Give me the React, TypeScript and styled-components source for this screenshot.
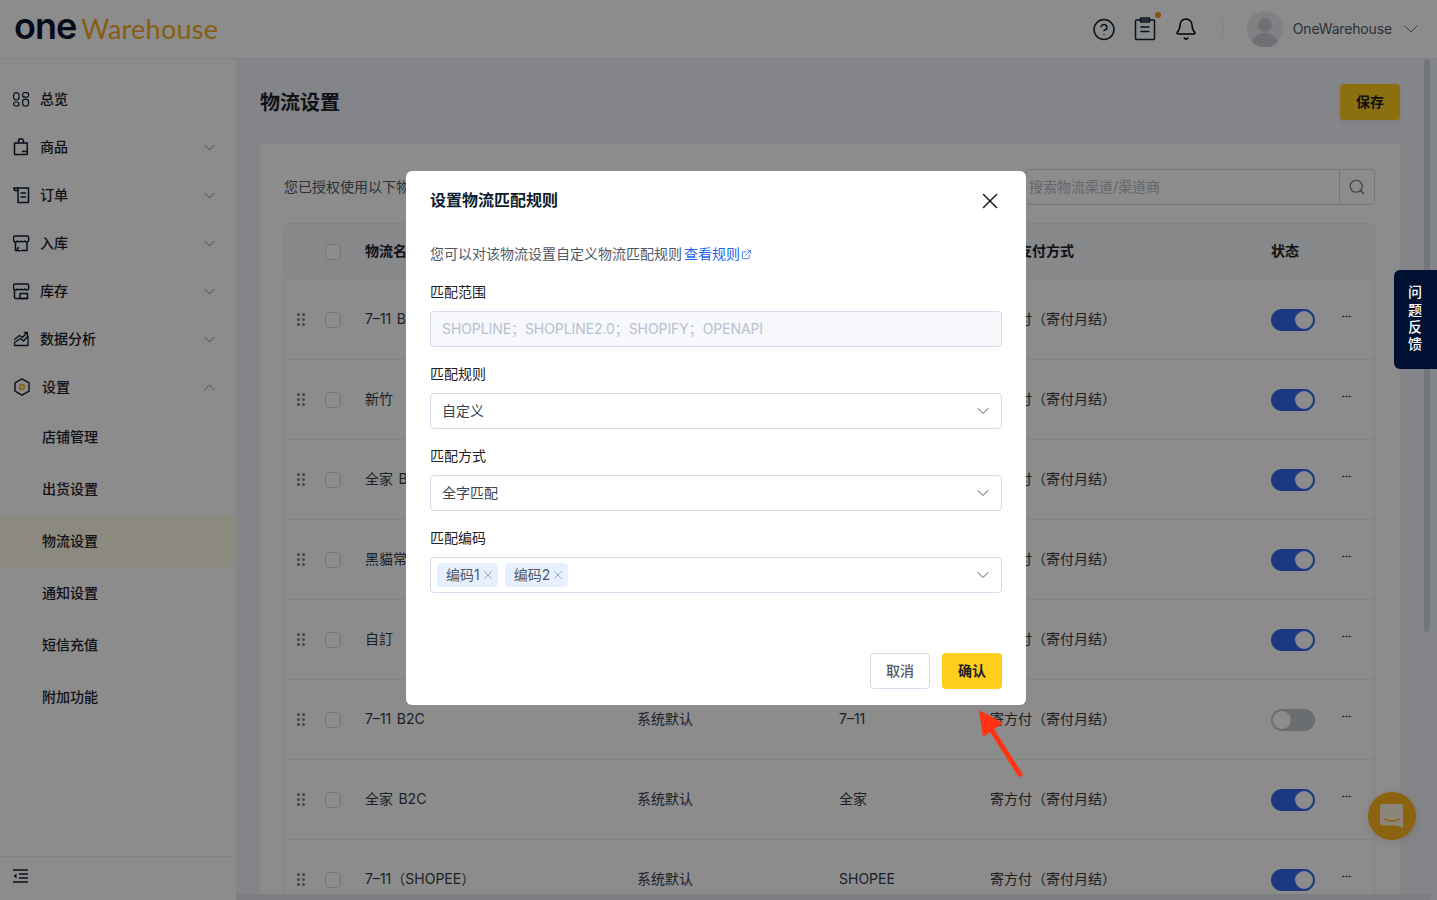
import React from "react";
import styled, { createGlobalStyle } from "styled-components";
import { Bell, ChevronDown, ChevronUp, CircleHelp, Ellipsis, ExternalLink, Search, X } from "lucide-react";

const Global = createGlobalStyle`
  html, body { margin: 0; height: 100%; overflow: hidden; }
  body { font-family: Inter, "Noto Sans CJK SC", sans-serif; font-size: 14px; line-height: 20px; color: #1d2129; background: #fff; }
  * { box-sizing: border-box; }
`;

const Shell = styled.div`height: 100vh; display: flex; flex-direction: column;`;
const Header = styled.header`
  height: 59px; flex: none; display: flex; align-items: center; background: #fff;
  border-bottom: 1px solid #eceef2; padding: 0 14px 0 14px;
`;
const Logo = styled.div`display: flex; align-items: baseline; gap: 5px; margin-top: -7px; flex: 1;`;
const LogoOne = styled.span`font: 600 36px/1 Inter, sans-serif; color: #0a1430; letter-spacing: -1px;`;
const LogoWare = styled.span`font: 400 27px/1 Lato, sans-serif; color: #f4aa24; letter-spacing: 0.25px;`;
const HeaderIcons = styled.div`display: flex; align-items: center; gap: 17px; color: #0a1f33;`;
const IconSlot = styled.span`position: relative; display: flex; width: 24px; justify-content: center;`;
const Dot = styled.i`position: absolute; top: -5px; right: -4px; width: 6px; height: 6px; border-radius: 50%; background: #f0921e;`;
const VDivider = styled.span`width: 1px; height: 20px; background: #e8eaee; margin: 0 24px 0 24px;`;
const UserName = styled.span`margin-left: 10px; color: #4e5969; font-size: 14px; letter-spacing: -0.15px;`;
const UserChevron = styled.span`display: flex; margin-left: 7px; color: #6b7280;`;

const Body = styled.div`flex: 1; min-height: 0; display: flex;`;
const Sidebar = styled.aside`width: 236px; flex: none; background: #fff; display: flex; flex-direction: column;`;
const Nav = styled.nav`flex: 1; padding-top: 16px;`;
const NavItem = styled.div`
  height: 48px; display: flex; align-items: center; padding: 0 17px 0 13px; font-weight: 500; color: #1d2129;
`;
const NavIconWrap = styled.span`width: 18px; height: 18px; display: flex; margin-right: 9px; color: #0f1c33;`;
const NavLabel = styled.span<{ $shift?: boolean }>`flex: 1; margin-left: ${(p) => (p.$shift ? "2px" : "0")};`;
const NavChevron = styled.span`display: flex; color: #6f7582;`;
const SubItem = styled.div<{ $active?: boolean }>`
  height: 52px; display: flex; align-items: center; padding-left: 42px; font-weight: 500;
  background: ${(p) => (p.$active ? "#fffbe6" : "transparent")};
`;
const SideFooter = styled.div`
  height: 44px; flex: none; border-top: 1px solid #eceef2; display: flex; align-items: center; padding: 0 0 5px 13px; color: #0f1c33;
`;

const Main = styled.main`flex: 1; min-width: 0; background: #f0f2f7; overflow: hidden;`;
const Page = styled.div`width: 1188px; padding: 25px 24px 24px;`;
const TitleBar = styled.div`display: flex; align-items: center; justify-content: space-between; height: 36px; margin-bottom: 24px;`;
const PageTitle = styled.h1`margin: 2px 0 0; font-size: 20px; font-weight: 600; color: #1d2129; line-height: 36px;`;
const SaveButton = styled.button`
  width: 60px; height: 36px; border: 0; border-radius: 4px; background: #ffcd1c; color: #1d2129;
  font: 600 14px/20px Inter, "Noto Sans CJK SC", sans-serif; box-shadow: 0 2px 4px rgba(0,0,0,.08);
`;
const Card = styled.section`background: #fff; border-radius: 4px; padding: 25px 25px 12px 24px;`;
const Toolbar = styled.div`display: flex; align-items: center; justify-content: space-between; height: 36px; margin-bottom: 18px;`;
const AuthText = styled.span`color: #4e5969;`;
const SearchBox = styled.div`
  width: 350px; height: 36px; border: 1px solid #d4d8e8; border-radius: 4px; display: flex; align-items: center; padding-left: 3px;
`;
const SearchText = styled.span`flex: 1; color: #b4b9c5;`;
const SearchBtn = styled.span`width: 35px; height: 34px; border-left: 1px solid #d4d8e8; display: flex; align-items: center; justify-content: center; color: #6b7280;`;

const Table = styled.div`border: 1px solid #eceef2; border-radius: 4px 4px 0 0;`;
const cols = "40px 40px 272px 202px 151px 281px 70px 1fr";
const HeadRow = styled.div`
  height: 55px; display: grid; grid-template-columns: ${cols}; align-items: center; background: #f6f7fa; font-weight: 600; color: #1d2129;
`;
const Row = styled.div`
  height: 80px; display: grid; grid-template-columns: ${cols}; align-items: center; border-top: 1px solid #eceef2; color: #333a45;
`;
const Cell = styled.span`white-space: nowrap; margin-bottom: 2px; word-spacing: 1.5px;`;
const Grip = styled.span`
  display: grid; grid-template-columns: 3px 3px; gap: 2px; width: 8px; margin-left: 12px;
`;
const GripDot = styled.i`width: 3px; height: 3px; border-radius: 50%; background: #7c8296;`;
const Check = styled.span`display: block; width: 16px; height: 16px; border: 1px solid #d4d8e8; border-radius: 4px; background: #fff;`;
const Toggle = styled.span<{ $on: boolean }>`
  width: 44px; height: 22px; border-radius: 11px; display: flex; align-items: center; padding: 0 2px;
  justify-content: ${(p) => (p.$on ? "flex-end" : "flex-start")};
  background: ${(p) => (p.$on ? "#3366ee" : "#c2c7d0")};
`;
const Knob = styled.i`width: 18px; height: 18px; border-radius: 50%; background: #fff;`;
const More = styled.span`display: flex; margin-top: -6px; color: #1d2129;`;

const ScrollThumbV = styled.div`position: fixed; left: 1424px; top: 59px; width: 6px; height: 573px; border-radius: 3px; background: #cfd6e0;`;
const ScrollThumbH = styled.div`position: fixed; left: 236px; top: 894px; width: 1194px; height: 6px; background: #e2e5eb;`;
const ChatBubble = styled.div`
  position: fixed; left: 1368px; top: 792px; width: 48px; height: 48px; border-radius: 50%; background: #ffb41c;
  display: flex; align-items: center; justify-content: center; box-shadow: 0 2px 10px rgba(0,0,0,.12);
`;

const Mask = styled.div`position: fixed; inset: 0; background: rgba(0,0,0,.45); padding: 171px 0 0 406px; z-index: 10;`;
const Modal = styled.div`width: 620px; height: 534px; background: #fff; border-radius: 6px; padding: 17px 24px 16px; display: flex; flex-direction: column;`;
const ModalHead = styled.div`display: flex; align-items: center; justify-content: space-between; height: 24px; margin-bottom: 32px;`;
const ModalTitle = styled.h2`margin: 0; font-size: 16px; line-height: 24px; font-weight: 600; color: #0f1c2e;`;
const CloseBtn = styled.span`display: flex; margin: 2px -1px 0 0; color: #1d2129;`;
const Desc = styled.div`line-height: 20px; color: #4e5969; margin-bottom: 18px; display: flex; align-items: center;`;
const RuleLink = styled.span`color: #2468f2; margin-left: 2px; display: inline-flex; align-items: center; gap: 1px;`;
const Field = styled.div`margin-bottom: 17px;`;
const Label = styled.div`line-height: 20px; margin-bottom: 9px; color: #1d2129;`;
const Control = styled.div<{ $disabled?: boolean }>`
  height: 36px; border: 1px solid #d6d9ea; border-radius: 4px; display: flex; align-items: center;
  padding: 0 11px; justify-content: space-between;
  background: ${(p) => (p.$disabled ? "#f6f8fc" : "#fff")};
  color: ${(p) => (p.$disabled ? "#b9c0d0" : "#3c4350")};
  letter-spacing: ${(p) => (p.$disabled ? "-0.08px" : "0")};
`;
const Tags = styled.div`display: flex; gap: 7px; margin-left: -5px;`;
const Tag = styled.span`
  height: 24px; padding: 0 3px 0 9px; border-radius: 4px; background: #e6f0ff; color: #4e5969; display: flex; align-items: center; gap: 1px;
`;
const TagX = styled.span`display: flex; color: #7d8594;`;
const SelectChevron = styled.span`display: flex; margin-right: -3px; color: #3c4350;`;
const ModalFoot = styled.div`margin-top: auto; display: flex; justify-content: flex-end; gap: 12px;`;
const CancelBtn = styled.button`
  width: 60px; height: 36px; background: #fff; border: 1px solid #d6d9ea; border-radius: 4px; color: #4e5969;
  font: 500 14px/20px Inter, "Noto Sans CJK SC", sans-serif;
`;
const ConfirmBtn = styled.button`
  width: 60px; height: 36px; background: #ffcd1c; border: 0; border-radius: 4px; color: #1d2129;
  font: 600 14px/20px Inter, "Noto Sans CJK SC", sans-serif;
`;

const Feedback = styled.div`
  position: fixed; right: 0; top: 270px; width: 43px; height: 99px; z-index: 20; background: #001033; color: #fff;
  border-radius: 6px 0 0 6px; font-weight: 500; display: flex; flex-direction: column; align-items: center; justify-content: center;
  line-height: 17.3px; padding: 0 1px 3px 0;
`;
const Arrow = styled.svg`position: fixed; left: 970px; top: 700px; z-index: 20;`;

const S = { fill: "none", stroke: "currentColor", strokeWidth: 1.5, strokeLinecap: "round" as const, strokeLinejoin: "round" as const };
const icons: Record<string, React.ReactNode> = {
  home: (<svg width="18" height="18" viewBox="0 0 18 18" {...S} strokeWidth={1.2}><rect x=".6" y="2.600" width="5.400" height="7.400" rx="2.700"/><rect x=".6" y="12" width="5.400" height="4" rx="2"/><rect x="9.600" y="2.600" width="6" height="4.600" rx="2"/><rect x="9.600" y="9.200" width="6" height="6.800" rx="2.800"/></svg>),
  bag: (<svg width="18" height="18" viewBox="0 0 18 18" {...S}><path d="M1.500 16.500V5h12.800v11.500z"/><path d="M5.500 5V3.300a2.500 2.500 0 0 1 5 0V5"/><path d="M9.500 13.500h4.500"/></svg>),
  order: (<svg width="18" height="18" viewBox="0 0 18 18" {...S}><path d="M1 2h14.500v14.500H5V3.500C5 2.500 4 2 3 2"/><path d="M1 2c0 1 0 2.500 1.500 2.500H5"/><path d="M8 7h4.500M8 11h4.500"/></svg>),
  inbound: (<svg width="18" height="18" viewBox="0 0 18 18" {...S}><path d="M2.500 2h11.500c1 0 1.700.8 1.700 1.700v2.300a2.100 2.100 0 0 1-3.900 1 2.600 2.600 0 0 1-3.700 0 2.600 2.600 0 0 1-3.700 0 2.100 2.100 0 0 1-3.900-1V3.700C.5 2.800 1.500 2 2.500 2z"/><path d="M2.500 9v7.500h2M14 9v7.500H8"/><path d="M5.500 13.500l-1.500 2.500 2.500 1"/></svg>),
  stock: (<svg width="18" height="18" viewBox="0 0 18 18" {...S}><path d="M2.500 2h11.500c1 0 1.700.8 1.700 1.700v2.300a2.100 2.100 0 0 1-3.900 1 2.600 2.600 0 0 1-3.700 0 2.600 2.600 0 0 1-3.700 0 2.100 2.100 0 0 1-3.900-1V3.700C.5 2.800 1.500 2 2.500 2z"/><path d="M1.500 9v6c0 1 .7 1.500 1.500 1.500h11.500"/><path d="M7 11.500h7.500v5H7z"/></svg>),
  data: (<svg width="18" height="18" viewBox="0 0 18 18" {...S} strokeWidth={1.3}><path d="M1.500 15.500h13.500V6l-4.500 5-3-2.500-6 4z"/><path d="M1.500 9.500l5-4 3 2 4.500-5"/><path d="M11.500 2.500h2.800v2.800"/></svg>),
  gear: (<svg width="18" height="18" viewBox="0 0 18 18" fill="none"><path d="M9 .8l7 4v8.400l-7 4-7-4V4.800z" stroke="#0f1c33" strokeWidth="1.400" strokeLinejoin="round"/><circle cx="9" cy="9" r="2.300" stroke="#f0b420" strokeWidth="1.800"/></svg>),
};

const navMain = [
  { icon: "home", label: "总览" }, { icon: "bag", label: "商品", more: true }, { icon: "order", label: "订单", more: true },
  { icon: "inbound", label: "入库", more: true }, { icon: "stock", label: "库存", more: true }, { icon: "data", label: "数据分析", more: true },
];
const subs = ["店铺管理", "出货设置", "物流设置", "通知设置", "短信充值", "附加功能"];
const pay = "寄方付（寄付月结）";
const rows = [
  ["7–11 B2C", "系统默认", "7–11", true], ["新竹", "系统默认", "新竹", true], ["全家 B2C", "系统默认", "全家", true],
  ["黑貓常溫", "系统默认", "黑貓", true], ["自訂", "系统默认", "自訂", true], ["7–11 B2C", "系统默认", "7–11", false],
  ["全家 B2C", "系统默认", "全家", true], ["7–11（SHOPEE）", "系统默认", "SHOPEE", true],
] as [string, string, string, boolean][];

const GripIcon = () => (<Grip>{[0, 1, 2, 3, 4, 5].map((i) => <GripDot key={i} />)}</Grip>);

export default function App() {
  return (
    <Shell>
      <Global />
      <Header>
        <Logo><LogoOne>one</LogoOne><LogoWare>Warehouse</LogoWare></Logo>
        <HeaderIcons>
          <IconSlot><CircleHelp size={25} strokeWidth={1.5} /></IconSlot>
          <IconSlot>
            <svg width="22" height="24" viewBox="0 0 22 24" {...S}><rect x="1.500" y="3" width="19" height="19.500" rx="1"/><path d="M6.500 1h9v4h-9z"/><path d="M7 10h8M7 14.500h8"/></svg>
            <Dot />
          </IconSlot>
          <IconSlot><Bell size={24} strokeWidth={1.5} color="#000" /></IconSlot>
        </HeaderIcons>
        <VDivider />
        <svg width="36" height="36" viewBox="0 0 36 36"><circle cx="18" cy="18" r="18" fill="#e9ebef"/><circle cx="18" cy="14" r="7" fill="#c9cdd4"/><path d="M5 31c2-7 8-9 13-9s11 2 13 9a18 18 0 0 1-26 0z" fill="#c9cdd4"/></svg>
        <UserName>OneWarehouse</UserName>
        <UserChevron><ChevronDown size={24} strokeWidth={1} /></UserChevron>
      </Header>
      <Body>
        <Sidebar>
          <Nav>
            {navMain.map((n) => (
              <NavItem key={n.label}>
                <NavIconWrap>{icons[n.icon]}</NavIconWrap>
                <NavLabel>{n.label}</NavLabel>
                {n.more && <NavChevron><ChevronDown size={19} strokeWidth={1} /></NavChevron>}
              </NavItem>
            ))}
            <NavItem>
              <NavIconWrap>{icons.gear}</NavIconWrap>
              <NavLabel $shift>设置</NavLabel>
              <NavChevron><ChevronUp size={19} strokeWidth={1} /></NavChevron>
            </NavItem>
            {subs.map((s) => <SubItem key={s} $active={s === "物流设置"}>{s}</SubItem>)}
          </Nav>
          <SideFooter>
            <svg width="15" height="14" viewBox="0 0 15 14" fill="none" stroke="currentColor" strokeWidth="1.300"><path d="M0 1h15M6 5h9M6 9h9M0 13h15"/><path d="M3.500 4.500L.5 7l3 2.500z" fill="currentColor" stroke="none"/></svg>
          </SideFooter>
        </Sidebar>
        <Main>
          <Page>
            <TitleBar>
              <PageTitle>物流设置</PageTitle>
              <SaveButton>保存</SaveButton>
            </TitleBar>
            <Card>
              <Toolbar>
                <AuthText>您已授权使用以下物流服务</AuthText>
                <SearchBox>
                  <SearchText>搜索物流渠道/渠道商</SearchText>
                  <SearchBtn><Search size={18} strokeWidth={1.5} /></SearchBtn>
                </SearchBox>
              </Toolbar>
              <Table>
                <HeadRow>
                  <Cell /><Check /><Cell>物流名称</Cell><Cell>来源</Cell><Cell>渠道商</Cell><Cell>物流支付方式</Cell><Cell>状态</Cell><Cell />
                </HeadRow>
                {rows.map(([name, src, ch, on], i) => (
                  <Row key={i}>
                    <GripIcon /><Check /><Cell>{name}</Cell><Cell>{src}</Cell><Cell>{ch}</Cell><Cell>{pay}</Cell>
                    <Toggle $on={on}><Knob /></Toggle>
                    <More><Ellipsis size={11} strokeWidth={2} /></More>
                  </Row>
                ))}
              </Table>
            </Card>
          </Page>
        </Main>
      </Body>
      <ScrollThumbV />
      <ScrollThumbH />
      <ChatBubble>
        <svg width="24" height="24" viewBox="0 0 24 24"><path d="M3 0h17a3 3 0 0 1 3 3v21l-6-2.500H3a3 3 0 0 1-3-3V3a3 3 0 0 1 3-3z" fill="#fff" fillOpacity=".85"/><path d="M4.500 15c4 3 11 3 15 0" fill="none" stroke="#ffb41c" strokeWidth="1.500" strokeLinecap="round"/></svg>
      </ChatBubble>

      <Mask>
        <Modal>
          <ModalHead>
            <ModalTitle>设置物流匹配规则</ModalTitle>
            <CloseBtn><X size={26} strokeWidth={1.5} /></CloseBtn>
          </ModalHead>
          <Desc>您可以对该物流设置自定义物流匹配规则<RuleLink>查看规则<ExternalLink size={11} strokeWidth={1.8} /></RuleLink></Desc>
          <Field>
            <Label>匹配范围</Label>
            <Control $disabled>SHOPLINE；SHOPLINE2.0；SHOPIFY；OPENAPI</Control>
          </Field>
          <Field>
            <Label>匹配规则</Label>
            <Control>自定义<SelectChevron><ChevronDown size={20} strokeWidth={1.1} /></SelectChevron></Control>
          </Field>
          <Field>
            <Label>匹配方式</Label>
            <Control>全字匹配<SelectChevron><ChevronDown size={20} strokeWidth={1.1} /></SelectChevron></Control>
          </Field>
          <Field>
            <Label>匹配编码</Label>
            <Control>
              <Tags>
                <Tag>编码1<TagX><X size={14} strokeWidth={1.2} /></TagX></Tag>
                <Tag>编码2<TagX><X size={14} strokeWidth={1.2} /></TagX></Tag>
              </Tags>
              <SelectChevron><ChevronDown size={20} strokeWidth={1.1} /></SelectChevron>
            </Control>
          </Field>
          <ModalFoot>
            <CancelBtn>取消</CancelBtn>
            <ConfirmBtn>确认</ConfirmBtn>
          </ModalFoot>
        </Modal>
      </Mask>
      <Feedback><span>问</span><span>题</span><span>反</span><span>馈</span></Feedback>
      <Arrow width="60" height="85" viewBox="0 0 60 85">
        <path d="M9 10L13 37L33 23z" fill="#ff3311" />
        <path d="M21 29L51 76" stroke="#ff3311" strokeWidth="5" fill="none" />
      </Arrow>
    </Shell>
  );
}
